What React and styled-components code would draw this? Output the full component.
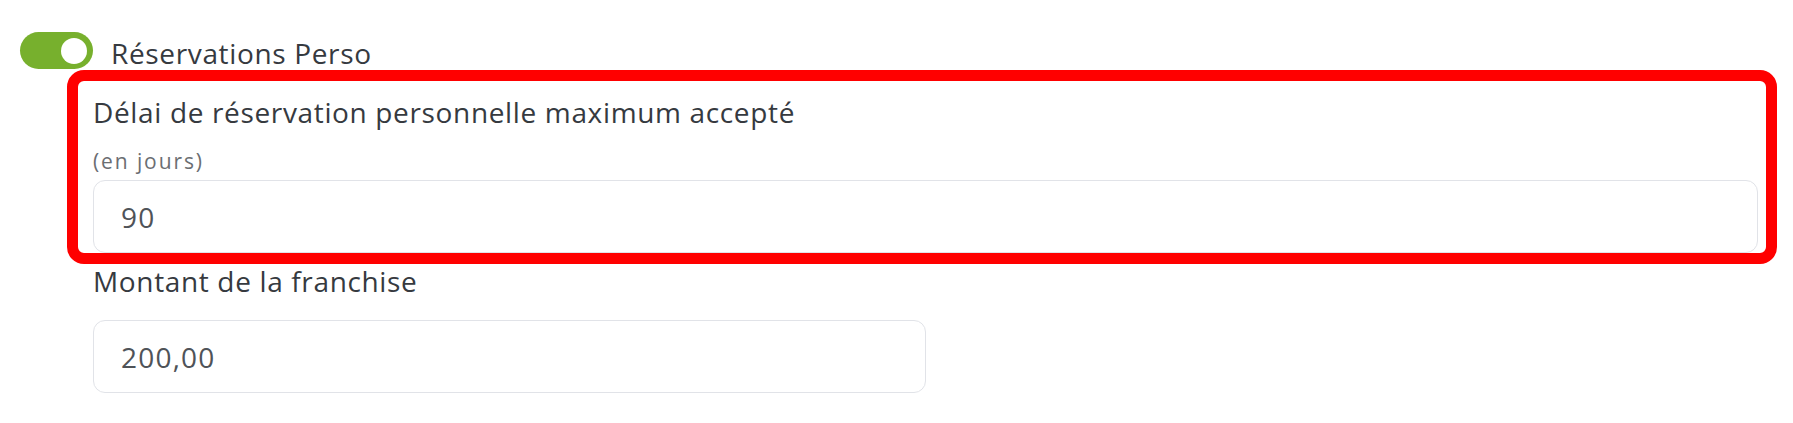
import React from "react";
import styled, { createGlobalStyle } from "styled-components";

const GlobalStyle = createGlobalStyle`
  body {
    margin: 0;
    background: #fff;
    font-family: "Open Sans", "Liberation Sans", sans-serif;
    color: #363a3f;
  }
`;

const Page = styled.div`
  padding: 32px 0 0 20px;
`;

const ToggleRow = styled.div`
  display: flex;
  align-items: flex-start;
  gap: 18px;
  height: 37px;
`;

const Switch = styled.div`
  width: 73px;
  height: 37px;
  border-radius: 19px;
  background: ${(p) => (p.on ? "#77b02d" : "#ccc")};
  display: flex;
  align-items: center;
  justify-content: ${(p) => (p.on ? "flex-end" : "flex-start")};
  padding: 0 6px;
  box-sizing: border-box;
  flex-shrink: 0;
`;

const Knob = styled.div`
  width: 26px;
  height: 26px;
  border-radius: 50%;
  background: #fff;
`;

const ToggleLabel = styled.span`
  font-size: 28px;
  line-height: 38px;
  letter-spacing: 0.65px;
  margin-top: 2px;
  color: #363a3f;
  white-space: nowrap;
`;

const Fields = styled.div`
  margin: 1px 16px 0 47px;
`;

const Highlight = styled.div`
  border: 11px solid #ff0000;
  border-radius: 17px;
  padding: 14px 8px 0 15px;
`;

const Field = styled.div`
  display: flex;
  flex-direction: column;
  padding-left: ${(p) => p.indent || 0}px;
`;

const Label = styled.label`
  font-size: 28px;
  line-height: 34px;
  letter-spacing: 0.65px;
  color: #363a3f;
`;

const Hint = styled.span`
  font-size: 21px;
  line-height: 28px;
  letter-spacing: 1.9px;
  color: #6b6e72;
  margin-top: 18px;
  margin-bottom: 5px;
`;

const Input = styled.div`
  height: 73px;
  width: ${(p) => p.width || "auto"};
  box-sizing: border-box;
  border: 1.5px solid #e1e3e8;
  border-radius: 12px;
  padding-left: 27px;
  display: flex;
  align-items: center;
  font-size: 28px;
  letter-spacing: 1.2px;
  color: #4f5358;
  margin-top: ${(p) => p.gap || 0}px;
`;

export default function App() {
  return (
    <>
      <GlobalStyle />
      <Page>
        <ToggleRow>
          <Switch on>
            <Knob />
          </Switch>
          <ToggleLabel>Réservations Perso</ToggleLabel>
        </ToggleRow>
        <Fields>
          <Highlight>
            <Field>
              <Label>Délai de réservation personnelle maximum accepté</Label>
              <Hint>(en jours)</Hint>
              <Input>90</Input>
            </Field>
          </Highlight>
          <Field indent={26}>
            <Label>Montant de la franchise</Label>
            <Input width="833px" gap={22}>200,00</Input>
          </Field>
        </Fields>
      </Page>
    </>
  );
}
